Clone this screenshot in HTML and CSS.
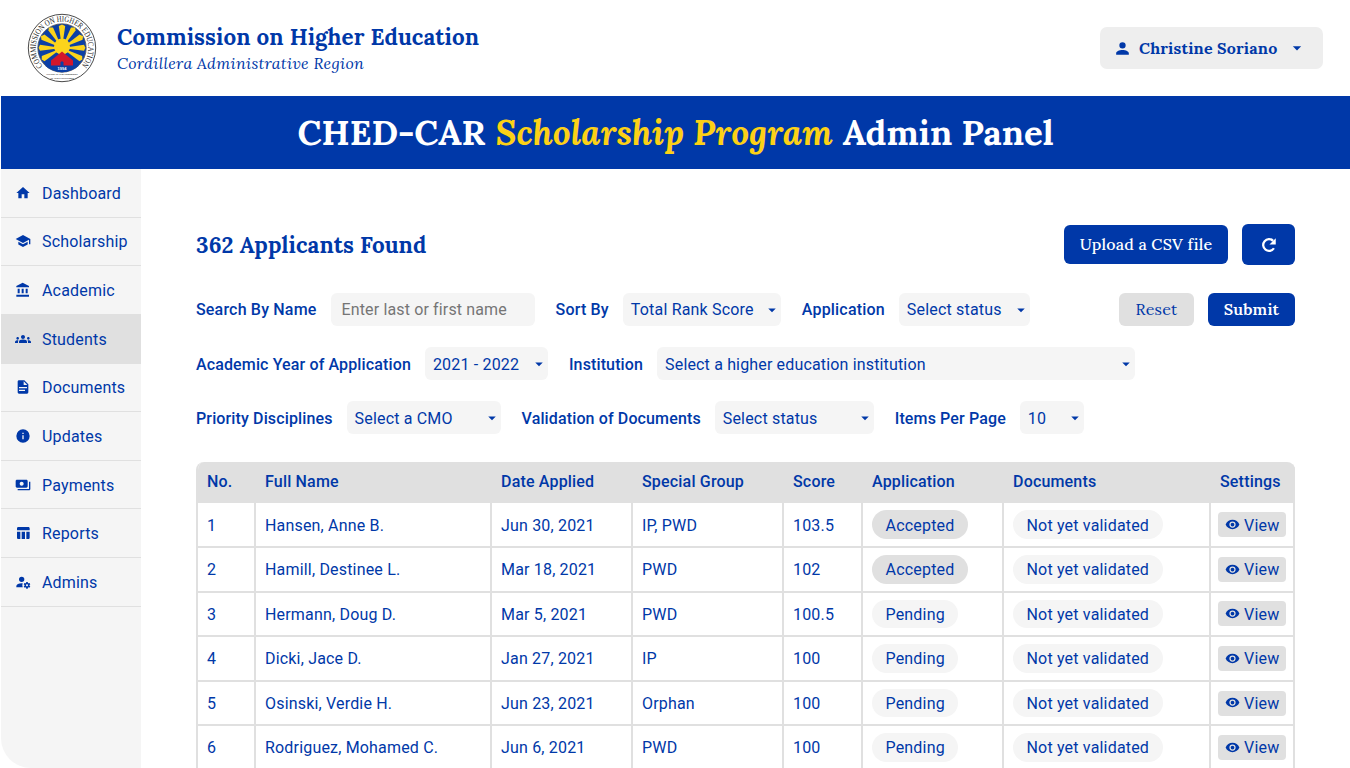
FILE: index.html
```html
<!DOCTYPE html>
<html lang="en">
<head>
<meta charset="utf-8">
<title>CHED-CAR Scholarship Program Admin Panel</title>
<link rel="stylesheet" href="styles.css">
</head>
<body>
<svg class="defs" aria-hidden="true">
  <symbol id="caret" viewBox="0 0 24 24"><path d="M7,10L12,15L17,10H7Z"/></symbol>
  <symbol id="eye" viewBox="0 0 24 24"><path d="M12,9A3,3 0 0,0 9,12A3,3 0 0,0 12,15A3,3 0 0,0 15,12A3,3 0 0,0 12,9M12,17A5,5 0 0,1 7,12A5,5 0 0,1 12,7A5,5 0 0,1 17,12A5,5 0 0,1 12,17M12,4.5C7,4.5 2.73,7.61 1,12C2.73,16.39 7,19.5 12,19.5C17,19.5 21.27,16.39 23,12C21.27,7.61 17,4.5 12,4.5Z"/></symbol>
</svg>
<div class="page">
  <header class="top">
    <svg class="seal" viewBox="0 0 70 70">
      <defs><path id="ring" d="M15.800,52.900A26.300,26.300 0 1 1 54.200,52.900"/></defs>
      <circle cx="35" cy="35" r="33.7" fill="#fff" stroke="#4a4a4a" stroke-width="1"/>
      <circle cx="35" cy="35" r="24.2" fill="#0b3fa6" stroke="#555" stroke-width=".8"/>
      <text class="seal-ring"><textPath href="#ring" textLength="121" lengthAdjust="spacingAndGlyphs">COMMISSION ON HIGHER EDUCATION</textPath></text>
      <g fill="#fbd41c">
        <path d="M35,35L31.8,13L35,11.5L38.2,13Z"/>
        <path d="M35,35L21.4,17.5L22,14.6L26,14.6Z"/>
        <path d="M35,35L48.6,17.5L48,14.6L44,14.6Z"/>
        <path d="M35,35L14.4,26.8L14,23.3L17.5,21.4Z"/>
        <path d="M35,35L55.6,26.8L56,23.3L52.5,21.4Z"/>
        <path d="M35,35L13,37.8L11.6,34.8L13,31.8Z"/>
        <path d="M35,35L57,37.8L58.4,34.8L57,31.8Z"/>
        <path d="M35,35L17.5,48.2L14.7,46.4L14.8,43Z"/>
        <path d="M35,35L52.5,48.2L55.3,46.4L55.2,43Z"/>
        <circle cx="35" cy="33.5" r="8"/>
      </g>
      <path d="M35,38.500L46,47.500V53H24V47.500Z" fill="#d2172c"/>
      <path d="M33.500,53V49.500L35,48L36.500,49.500V53Z" fill="#0b3fa6"/>
      <path d="M18,52.6H52Q45,59.2 35,59.2Q25,59.2 18,52.6Z" fill="#0b3fa6"/>
      <text class="seal-year" x="35" y="57">1994</text>
      <text class="seal-foot" x="35" y="62.200">OFFICE OF THE PRESIDENT</text>
      <text class="seal-foot" x="35" y="65.600">OF THE PHILIPPINES</text>
    </svg>
    <div class="org">
      <div class="org-name">Commission on Higher Education</div>
      <div class="org-region">Cordillera Administrative Region</div>
    </div>
    <button class="user">
      <svg class="user-icon" viewBox="0 0 24 24"><path d="M12,4A4,4 0 0,1 16,8A4,4 0 0,1 12,12A4,4 0 0,1 8,8A4,4 0 0,1 12,4M12,14C16.42,14 20,15.79 20,18V20H4V18C4,15.79 7.58,14 12,14Z"/></svg>
      <span class="user-name">Christine Soriano</span>
      <svg class="user-caret"><use href="#caret"/></svg>
    </button>
  </header>
  <h1 class="banner"><span class="b1">CHED-CAR</span><em class="b2">Scholarship Program</em><span class="b3">Admin Panel</span></h1>
  <div class="body">
    <nav class="side">
      <a class="nav"><svg viewBox="0 0 24 24"><path d="M10,20V14H14V20H19V12H22L12,3L2,12H5V20H10Z"/></svg>Dashboard</a>
      <a class="nav"><svg viewBox="0 0 24 24"><path d="M12,3L1,9L12,15L21,10.09V17H23V9M5,13.18V17.18L12,21L19,17.18V13.18L12,17L5,13.18Z"/></svg>Scholarship</a>
      <a class="nav"><svg viewBox="0 0 24 24"><path d="M11.5,1L2,6V8H21V6M16,10V17H19V10M2,22H21V19H2M10,10V17H13V10M4,10V17H7V10H4Z"/></svg>Academic</a>
      <a class="nav active"><svg viewBox="0 0 24 24"><path d="M12 12.75c1.63 0 3.07.39 4.24.9 1.08.48 1.76 1.56 1.76 2.73V18H6v-1.61c0-1.18.68-2.26 1.76-2.73 1.17-.52 2.61-.91 4.24-.91zM4 13c1.1 0 2-.9 2-2s-.9-2-2-2-2 .9-2 2 .9 2 2 2zm1.13 1.1c-.37-.06-.74-.1-1.13-.1-.99 0-1.93.21-2.78.58C.48 14.9 0 15.62 0 16.43V18h4.500v-1.610c0-.83.23-1.610.63-2.290zM20 13c1.100 0 2-.9 2-2s-.9-2-2-2-2 .9-2 2 .9 2 2 2zm4 3.430c0-.81-.48-1.530-1.220-1.850-.85-.37-1.790-.58-2.780-.58-.39 0-.76.04-1.130.1.400.68.630 1.460.63 2.290V18H24v-1.570zM12 6c1.660 0 3 1.340 3 3s-1.340 3-3 3-3-1.340-3-3 1.340-3 3-3z"/></svg>Students</a>
      <a class="nav"><svg viewBox="0 0 24 24"><path d="M13,9H18.500L13,3.500V9M6,2H14L20,8V20A2,2 0 0,1 18,22H6C4.890,22 4,21.100 4,20V4C4,2.890 4.890,2 6,2M15,18V16H6V18H15M18,14V12H6V14H18Z"/></svg>Documents</a>
      <a class="nav"><svg viewBox="0 0 24 24"><path d="M13,9H11V7H13M13,17H11V11H13M12,2A10,10 0 0,0 2,12A10,10 0 0,0 12,22A10,10 0 0,0 22,12A10,10 0 0,0 12,2Z"/></svg>Updates</a>
      <a class="nav"><svg viewBox="0 0 24 24"><path d="M19 14V6c0-1.100-.9-2-2-2H3c-1.100 0-2 .9-2 2v8c0 1.100.9 2 2 2h14c1.100 0 2-.9 2-2zm-9-1c-1.660 0-3-1.340-3-3s1.340-3 3-3 3 1.340 3 3-1.340 3-3 3zm13-6v11c0 1.100-.9 2-2 2H4v-2h17V7h2z"/></svg>Payments</a>
      <a class="nav"><svg viewBox="0 0 24 24"><path d="M10 10.020h5V21h-5zM17 21h3c1.100 0 2-.9 2-2v-9h-5v11zm3-18H5c-1.100 0-2 .9-2 2v3h19V5c0-1.100-.9-2-2-2zM3 19c0 1.100.9 2 2 2h3V10H3v9z"/></svg>Reports</a>
      <a class="nav"><svg viewBox="0 0 24 24"><path d="M10,4A4,4 0 0,0 6,8A4,4 0 0,0 10,12A4,4 0 0,0 14,8A4,4 0 0,0 10,4M17,12C16.870,12 16.760,12.090 16.740,12.210L16.550,13.530C16.250,13.660 15.960,13.820 15.700,14L14.460,13.500C14.350,13.500 14.220,13.500 14.150,13.630L13.150,15.360C13.090,15.470 13.110,15.600 13.210,15.680L14.270,16.500C14.250,16.670 14.240,16.830 14.240,17C14.240,17.170 14.250,17.330 14.270,17.500L13.210,18.320C13.120,18.400 13.090,18.530 13.150,18.640L14.150,20.370C14.210,20.500 14.340,20.500 14.460,20.500L15.700,20C15.960,20.180 16.240,20.350 16.550,20.470L16.740,21.790C16.760,21.910 16.860,22 17,22H19C19.110,22 19.220,21.910 19.240,21.790L19.430,20.470C19.730,20.340 20,20.180 20.270,20L21.500,20.500C21.630,20.500 21.760,20.500 21.830,20.370L22.830,18.640C22.890,18.530 22.860,18.400 22.770,18.320L21.700,17.500C21.720,17.330 21.740,17.170 21.740,17C21.740,16.830 21.730,16.670 21.700,16.500L22.760,15.680C22.850,15.600 22.880,15.470 22.820,15.360L21.820,13.630C21.760,13.500 21.630,13.500 21.500,13.500L20.270,14C20,13.820 19.730,13.650 19.420,13.530L19.230,12.210C19.220,12.090 19.110,12 19,12H17M10,14C5.580,14 2,15.790 2,18V20H11.680A7,7 0 0,1 11,17A7,7 0 0,1 11.640,14.090C11.110,14.030 10.560,14 10,14M18,15.500C18.830,15.500 19.500,16.170 19.500,17C19.500,17.830 18.830,18.500 18,18.500C17.160,18.500 16.500,17.830 16.500,17C16.500,16.170 17.170,15.500 18,15.500Z"/></svg>Admins</a>
    </nav>
    <main class="main">
      <div class="head">
        <h2 class="found">362 Applicants Found</h2>
        <button class="btn upload">Upload a CSV file</button>
        <button class="btn refresh"><svg viewBox="0 0 20 20"><path d="M15.500,13.600A6.500,6.500 0 1 1 14.600,5.400" fill="none" stroke="#fff" stroke-width="2.500"/><path d="M17.500,2.500V9.500H10.500Z" fill="#fff"/></svg></button>
      </div>
      <div class="filters">
        <div class="line">
          <label>Search By Name</label><div class="ctl search">Enter last or first name</div>
          <label>Sort By</label><div class="ctl sort">Total Rank Score<svg><use href="#caret"/></svg></div>
          <label>Application</label><div class="ctl app">Select status<svg><use href="#caret"/></svg></div>
          <button class="btn reset">Reset</button>
          <button class="btn submit">Submit</button>
        </div>
        <div class="line low">
          <label>Academic Year of Application</label><div class="ctl year">2021 - 2022<svg><use href="#caret"/></svg></div>
          <label>Institution</label><div class="ctl inst">Select a higher education institution<svg><use href="#caret"/></svg></div>
        </div>
        <div class="line low">
          <label>Priority Disciplines</label><div class="ctl cmo">Select a CMO<svg><use href="#caret"/></svg></div>
          <label>Validation of Documents</label><div class="ctl docs">Select status<svg><use href="#caret"/></svg></div>
          <label>Items Per Page</label><div class="ctl items">10<svg><use href="#caret"/></svg></div>
        </div>
      </div>
      <div class="table">
        <div class="row thead"><div>No.</div><div>Full Name</div><div>Date Applied</div><div>Special Group</div><div>Score</div><div>Application</div><div>Documents</div><div>Settings</div></div>
        <div class="row"><div>1</div><div>Hansen, Anne B.</div><div>Jun 30, 2021</div><div>IP, PWD</div><div>103.5</div><div><span class="chip dark">Accepted</span></div><div><span class="chip">Not yet validated</span></div><div><button class="view"><svg><use href="#eye"/></svg>View</button></div></div>
        <div class="row"><div>2</div><div>Hamill, Destinee L.</div><div>Mar 18, 2021</div><div>PWD</div><div>102</div><div><span class="chip dark">Accepted</span></div><div><span class="chip">Not yet validated</span></div><div><button class="view"><svg><use href="#eye"/></svg>View</button></div></div>
        <div class="row"><div>3</div><div>Hermann, Doug D.</div><div>Mar 5, 2021</div><div>PWD</div><div>100.5</div><div><span class="chip">Pending</span></div><div><span class="chip">Not yet validated</span></div><div><button class="view"><svg><use href="#eye"/></svg>View</button></div></div>
        <div class="row"><div>4</div><div>Dicki, Jace D.</div><div>Jan 27, 2021</div><div>IP</div><div>100</div><div><span class="chip">Pending</span></div><div><span class="chip">Not yet validated</span></div><div><button class="view"><svg><use href="#eye"/></svg>View</button></div></div>
        <div class="row"><div>5</div><div>Osinski, Verdie H.</div><div>Jun 23, 2021</div><div>Orphan</div><div>100</div><div><span class="chip">Pending</span></div><div><span class="chip">Not yet validated</span></div><div><button class="view"><svg><use href="#eye"/></svg>View</button></div></div>
        <div class="row"><div>6</div><div>Rodriguez, Mohamed C.</div><div>Jun 6, 2021</div><div>PWD</div><div>100</div><div><span class="chip">Pending</span></div><div><span class="chip">Not yet validated</span></div><div><button class="view"><svg><use href="#eye"/></svg>View</button></div></div>
      </div>
    </main>
  </div>
</div>
</body>
</html>
```
FILE: styles.css
```css
* { box-sizing: border-box; }
html, body { margin: 0; height: 100%; overflow: hidden; background: #fff; }
body { font: 400 16px/24px Roboto, sans-serif; letter-spacing: .18px; color: #0038a8; }
button { font: inherit; letter-spacing: inherit; color: inherit; border: 0; margin: 0; padding: 0; }
svg { fill: currentColor; flex: none; display: block; }
.defs { position: absolute; width: 0; height: 0; }
.page { height: 768px; margin-left: 1px; display: flex; flex-direction: column; overflow: hidden; white-space: nowrap; }

.top { height: 96px; flex: none; display: flex; align-items: center; padding: 0 27px 0 26px; font-family: Lora, "Liberation Serif", serif; }
.seal { width: 70px; height: 70px; }
.seal-ring { font: 400 8.300px "Liberation Serif", serif; letter-spacing: 0; fill: #222; }
.seal-year { font: 700 4px "Liberation Sans", sans-serif; letter-spacing: 0; fill: #fff; text-anchor: middle; }
.seal-foot { font: 700 2.300px "Liberation Sans", sans-serif; letter-spacing: 0; fill: #444; text-anchor: middle; }
.org { margin-left: 20px; flex: 1; padding-top: 1px; }
.org-name { font-size: 22.400px; font-weight: 700; line-height: 28px; letter-spacing: .1px; }
.org-region { font-size: 16px; font-style: italic; line-height: 24px; letter-spacing: .25px; }
.user { width: 223px; height: 42px; border-radius: 7px; background: #eee; display: flex; align-items: center; padding: 0 16px 0 13px; font-weight: 700; }
.user-icon { width: 19px; height: 19px; }
.user-name { width: 140px; text-align: left; margin-left: 7px; font-size: 16px; letter-spacing: .16px; }
.user-caret { width: 20px; height: 20px; margin-left: 8px; }

.banner { height: 73px; flex: none; margin: 0; background: #0038a8; color: #fff; display: flex; justify-content: center; align-items: center; gap: 10px; font: 700 35px/72px Lora, "Liberation Serif", serif; letter-spacing: -.05px; }
.b2 { color: #fcd116; }

.body { flex: 1; min-height: 0; display: flex; }
.side { width: 140px; flex: none; background: #f5f5f5; border-bottom-left-radius: 30px; }
.nav { height: 48.650px; display: flex; align-items: center; gap: 11px; padding: 2px 0 0 14px; border-bottom: 1px solid #e0e0e0; }
.nav svg { width: 16px; height: 16px; margin-top: -2px; }
.nav.active { background: #e0e0e0; }

.main { width: 1099px; flex: none; margin-left: 55px; padding-top: 55px; }
.head { height: 41px; display: flex; align-items: center; }
.found { flex: 1; margin: 0; font: 700 22.400px/30px Lora, "Liberation Serif", serif; letter-spacing: .1px; }
.btn { background: #0038a8; color: #fff; border-radius: 6px; font: 600 16px/24px Lora, "Liberation Serif", serif; letter-spacing: .2px; padding-bottom: 2px; }
.upload { width: 164px; height: 39px; font-weight: 500; }
.refresh { width: 53px; height: 41px; margin-left: 14px; padding: 0; display: flex; align-items: center; justify-content: center; }
.refresh svg { width: 18px; height: 18px; }
.filters { margin-top: 28px; display: flex; flex-direction: column; gap: 21px; }
.line { height: 33px; display: flex; align-items: center; }
.line label { font-weight: 500; margin-right: 14px; }
.ctl { height: 33px; border-radius: 6px; background: #f5f5f5; margin-right: 21px; padding: 0 0 0 8px; display: flex; align-items: center; justify-content: space-between; }
.ctl svg { width: 18px; height: 18px; }
.low label { letter-spacing: .13px; }
.low label, .low .ctl { padding-top: 2px; }
.low svg { margin-top: -2px; }
.search { width: 204px; padding-left: 11px; letter-spacing: .14px; color: #757575; }
.sort { width: 158px; }
.app { width: 131px; }
.year { width: 123px; }
.inst { width: 478px; letter-spacing: .16px; }
.cmo { width: 154px; }
.docs { width: 159px; }
.items { width: 64px; }
.reset { width: 75px; height: 33px; margin-left: auto; background: #e0e0e0; color: #0038a8; font-weight: 400; }
.submit { width: 87px; height: 33px; margin-left: 14px; }

.table { margin-top: 28px; border-left: 2px solid #e0e0e0; border-radius: 8px 8px 0 0; overflow: hidden; }
.row { height: 44.600px; display: grid; grid-template-columns: 58px 236px 141px 151px 79px 141px 207px 84px; }
.row > div { border-right: 2px solid #e0e0e0; border-bottom: 2px solid #e0e0e0; padding-left: 9px; display: flex; align-items: center; }
.row > div:nth-child(-n+5) { padding-top: 1.500px; }
.row > div:last-child { padding-left: 7px; }
.row.thead { height: 41.400px; background: #e0e0e0; font-weight: 500; }
.row.thead > div { padding-top: 0; }
.row.thead > div:last-child { padding-left: 9px; }
.chip { height: 28.500px; line-height: 30.500px; padding: 0 13.500px; border-radius: 15px; background: #f5f5f5; }
.chip.dark { background: #e0e0e0; letter-spacing: .2px; }
.view { width: 68px; height: 25px; border-radius: 4px; background: #e0e0e0; display: flex; align-items: center; gap: 4px; padding: 1.500px 0 0 7px; letter-spacing: .2px; }
.view svg { width: 15px; height: 15px; margin-top: -2px; }
.thead + .row > div:nth-child(-n+5) { padding-top: 2.500px; }
.thead + .row .chip { line-height: 31.500px; }
.thead + .row .view { padding-top: 2.500px; }
```
